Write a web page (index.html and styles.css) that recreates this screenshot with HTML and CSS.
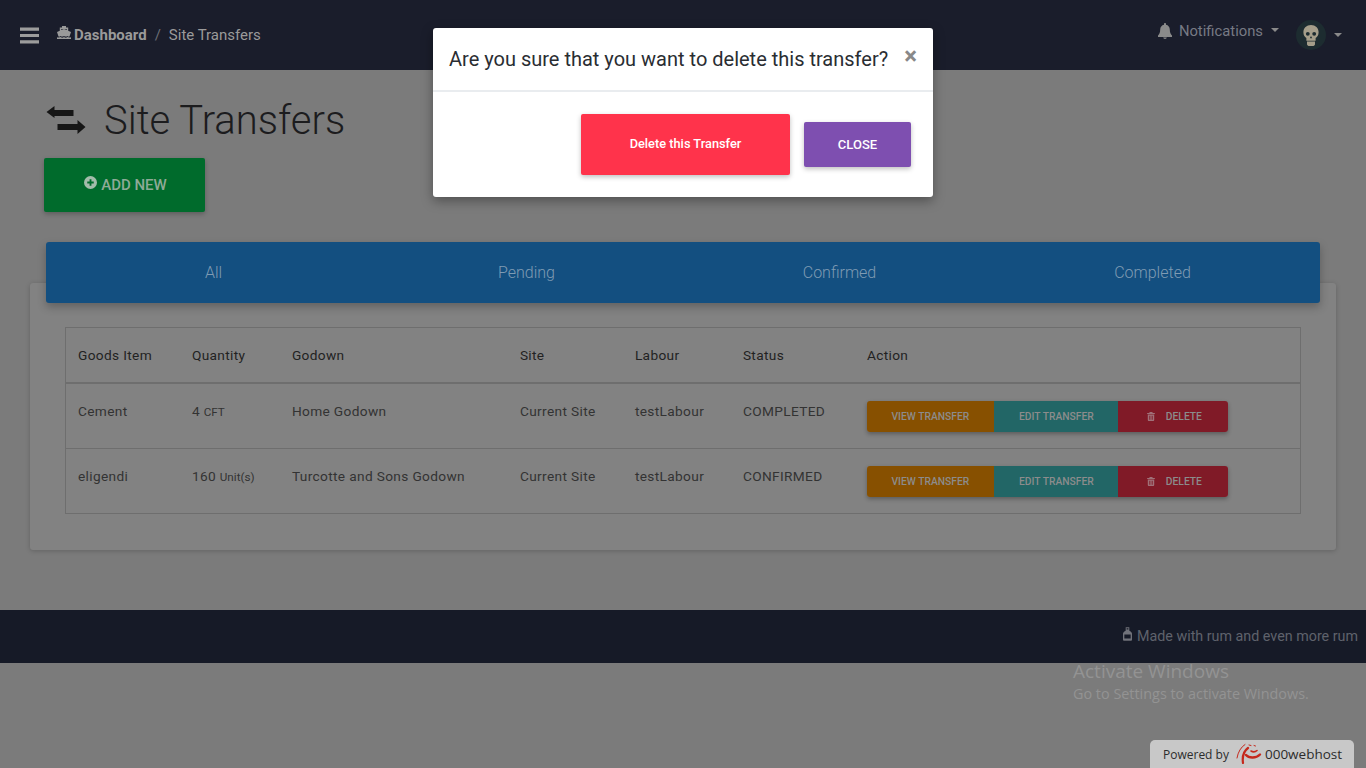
FILE: index.html
```html
<!DOCTYPE html>
<html lang="en">
<head>
    <meta charset="UTF-8">
    <meta name="viewport" content="width=device-width, initial-scale=1.0">
    <title>Site Transfers</title>
    <link rel="stylesheet" href="styles.css">
</head>
<body>
    <nav class="navbar">
        <div class="nav-left">
            <svg class="burger" viewBox="0 0 20 17"><path d="M0 0h20v3.400H0zM0 6.800h20v3.400H0zM0 13.600h20V17H0z"/></svg>
            <svg class="ship" viewBox="0 0 14 13"><path d="M5 0h4v1.500h2.200v3.200L14 6l-1.500 4.600c-.9.3-1.500-.2-2-.6-.9.8-2.300.8-3.500 0-1.200.8-2.600.8-3.500 0-.5.4-1.100.9-2 .6L0 6l2.800-1.300V1.500H5zM4.200 3v1l2.800-1 2.800 1V3zM0 11.200c1.200.6 2.300.5 3.500-.1 1.200.7 2.400.7 3.500 0 1.100.7 2.300.7 3.500 0 1.200.6 2.300.7 3.500.1V13H0z"/></svg>
            <b class="crumb-home">Dashboard</b>
            <span class="crumb-sep">/</span>
            <span class="crumb-page">Site Transfers</span>
        </div>
        <div class="nav-right">
            <svg class="bell" viewBox="0 0 14 16"><path d="M7 0c.6 0 1 .4 1 1v.7c2.300.5 3.800 2.400 3.800 4.800 0 3.500 1 4.700 2.200 6V14H0v-1.500c1.200-1.300 2.200-2.500 2.200-6 0-2.400 1.500-4.300 3.800-4.800V1c0-.6.4-1 1-1zM5.200 14.600h3.600c0 .8-.8 1.400-1.800 1.400s-1.800-.6-1.800-1.400z"/></svg>
            <span class="notif">Notifications</span>
            <i class="caret caret-notif"></i>
            <span class="avatar">
                <svg viewBox="0 0 20 26"><path d="M10 0c5.500 0 9.500 3.800 9.500 9 0 3.400-1.500 5.700-3.700 7v3.500H4.200V16C2 14.700.5 12.400.5 9 .5 3.800 4.500 0 10 0zM6 8.500a2.400 2.400 0 1 0 0 4.800 2.400 2.400 0 0 0 0-4.800zm8 0a2.400 2.400 0 1 0 0 4.800 2.400 2.400 0 0 0 0-4.800zm-4 5l-1.500 3h3z" fill-rule="evenodd"/><path d="M5 20.500h10V24c0 1-1 2-2 2H7c-1 0-2-1-2-2z"/></svg>
            </span>
            <i class="caret"></i>
        </div>
    </nav>

    <main class="content">
        <h1 class="page-title">
            <svg class="title-icon" viewBox="0 0 40 28"><path d="M.5 6l8-6v4h19v6h-19v2zM39.500 21l-8-7v4h-20v6h20v4z"/></svg>
            Site Transfers
        </h1>
        <button class="btn-add">
            <svg viewBox="0 0 14 14"><path fill-rule="evenodd" d="M7 0a7 7 0 1 1 0 14A7 7 0 0 1 7 0zM6 3.500v2.500H3.500v2H6v2.500h2V8h2.500V6H8V3.500z"/></svg>
            ADD NEW
        </button>

        <div class="tabs">
            <span>All</span>
            <span>Pending</span>
            <span>Confirmed</span>
            <span>Completed</span>
        </div>

        <section class="card">
            <table class="transfers">
                <thead>
                    <tr>
                        <th class="col-item">Goods Item</th>
                        <th class="col-qty">Quantity</th>
                        <th class="col-godown">Godown</th>
                        <th class="col-site">Site</th>
                        <th class="col-labour">Labour</th>
                        <th class="col-status">Status</th>
                        <th>Action</th>
                    </tr>
                </thead>
                <tbody>
                    <tr>
                        <td>Cement</td>
                        <td>4 <small>CFT</small></td>
                        <td>Home Godown</td>
                        <td>Current Site</td>
                        <td>testLabour</td>
                        <td>COMPLETED</td>
                        <td>
                            <div class="actions">
                                <a class="act act-view">View Transfer</a>
                                <a class="act act-edit">Edit Transfer</a>
                                <a class="act act-delete"><svg viewBox="0 0 12 14"><path fill-rule="evenodd" d="M4 0h4l.8 1.500H12V3H0V1.500h3.200zM1 4h10v8.500c0 .8-.7 1.500-1.500 1.500h-7C1.700 14 1 13.300 1 12.500zm2.200 1.800v6.200h1V5.800zm2.300 0v6.200h1V5.800zm2.300 0v6.200h1V5.800z"/></svg>Delete</a>
                            </div>
                        </td>
                    </tr>
                    <tr>
                        <td>eligendi</td>
                        <td>160 <small>Unit(s)</small></td>
                        <td>Turcotte and Sons Godown</td>
                        <td>Current Site</td>
                        <td>testLabour</td>
                        <td>CONFIRMED</td>
                        <td>
                            <div class="actions">
                                <a class="act act-view">View Transfer</a>
                                <a class="act act-edit">Edit Transfer</a>
                                <a class="act act-delete"><svg viewBox="0 0 12 14"><path fill-rule="evenodd" d="M4 0h4l.8 1.500H12V3H0V1.500h3.200zM1 4h10v8.500c0 .8-.7 1.500-1.500 1.500h-7C1.700 14 1 13.300 1 12.500zm2.200 1.800v6.200h1V5.800zm2.300 0v6.200h1V5.800zm2.300 0v6.200h1V5.800z"/></svg>Delete</a>
                            </div>
                        </td>
                    </tr>
                </tbody>
            </table>
        </section>
    </main>

    <footer class="footer">
        <svg viewBox="0 0 10 15"><path fill-rule="evenodd" d="M3 0h4v3.500c0 .6 3 1.500 3 3.500v7c0 .6-.4 1-1 1H1c-.6 0-1-.4-1-1V7c0-2 3-2.900 3-3.500zM4 1v1.500h2V1zM1.500 8v4.500h7V8z"/></svg>
        Made with rum and even more rum
    </footer>

    <div class="modal">
        <div class="modal-head">
            <h5>Are you sure that you want to delete this transfer?</h5>
            <span class="modal-x">&times;</span>
        </div>
        <div class="modal-body">
            <button class="btn-confirm">Delete this Transfer</button>
            <button class="btn-close">CLOSE</button>
        </div>
    </div>

    <div class="activate">
        <div class="activate-title">Activate Windows</div>
        <div class="activate-sub">Go to Settings to activate Windows.</div>
    </div>

    <div class="host-badge">
        <span>Powered by</span>
        <svg viewBox="0 0 26 22" fill="none" stroke="#c5281c" stroke-linecap="round"><path d="M9 1.500C5 4 2 9 1 15" stroke-width="1"/><path d="M12 5C8 8 6 13 7 20" stroke-width="2.200"/><path d="M10 12c3 3.500 10 3.500 14-.5" stroke-width="2.400"/><path d="M15 8c2 1.200 4 1.200 6-.5" stroke-width="1.600"/><path d="M13 2l2 .5M18 2.500l1.500.5" stroke-width="1"/></svg>
        <span class="host-name">000webhost</span>
    </div>
</body>
</html>
```

FILE: styles.css
```css
* {
    box-sizing: border-box;
}

body {
    margin: 0;
    min-height: 768px;
    font-family: Roboto, sans-serif;
    background-color: #7b7b7b;
    color: #2a2a2a;
    overflow: hidden;
}

/* top bar */
.navbar {
    display: flex;
    justify-content: space-between;
    height: 70px;
    background-color: #1a1d2b;
}

.nav-left {
    display: flex;
    align-items: center;
    padding-left: 20px;
    font-size: 15px;
    color: #9a9a9a;
}

.burger {
    width: 19px;
    height: 17px;
    margin-right: 18px;
    fill: #9c9c9c;
}

.ship {
    width: 14px;
    height: 13px;
    margin: -5px 3px 0 0;
    fill: #9a9a9a;
}

.crumb-home {
    font-weight: 700;
}

.crumb-sep {
    margin: 0 8px;
    color: #6b6d75;
}

.nav-right {
    display: flex;
    align-items: center;
    padding: 0 24px 8px 0;
    color: #777a84;
    font-size: 14.800px;
}

.bell {
    width: 14px;
    height: 16px;
    margin-right: 7px;
    fill: #8a8a8a;
}

.caret {
    width: 0;
    height: 0;
    margin-left: 8px;
    border-top: 4px solid #8a8a8a;
    border-left: 4px solid transparent;
    border-right: 4px solid transparent;
}

.caret-notif {
    margin-top: -2px;
}

.avatar {
    display: flex;
    align-items: center;
    justify-content: center;
    width: 30px;
    height: 30px;
    margin: 8px 0 0 17px;
    border-radius: 50%;
    background-color: #1d2c30;
}

.avatar + .caret {
    margin-top: 8px;
}

.avatar svg {
    width: 16px;
    height: 21px;
    fill: #a59e8a;
}

/* page body */
.content {
    height: 540px;
    padding: 25px 30px 0;
}

.page-title {
    display: flex;
    align-items: center;
    height: 50px;
    margin: 0 0 13px 16px;
    font-size: 40px;
    font-weight: 300;
    color: #1c1c1e;
}

.title-icon {
    width: 40px;
    height: 28px;
    margin-right: 18px;
    fill: #161616;
}

.btn-add {
    display: flex;
    align-items: center;
    justify-content: center;
    width: 161px;
    height: 54px;
    margin-left: 14px;
    padding: 0 0 0 2px;
    border: none;
    border-radius: 2px;
    background-color: #006b2c;
    color: #8eaa97;
    font-family: inherit;
    font-size: 15px;
    font-weight: 500;
    box-shadow: 0 2px 5px rgba(0, 0, 0, 0.25);
}

.btn-add svg {
    width: 13px;
    height: 13px;
    margin: -5px 4px 0 0;
    fill: #a3bcab;
}

.tabs {
    position: relative;
    z-index: 1;
    display: grid;
    grid-template-columns: repeat(4, 1fr);
    align-items: center;
    height: 61px;
    margin: 30px 16px 0;
    padding: 0 11px;
    border-radius: 3px;
    background-color: #134f80;
    color: #7f9bb3;
    font-size: 16px;
    font-weight: 300;
    text-align: center;
    box-shadow: 0 4px 8px rgba(0, 0, 0, 0.25);
}

.card {
    height: 267px;
    margin-top: -20px;
    padding: 44px 35px 0;
    border-radius: 3px;
    background-color: #828282;
    box-shadow: 0 1px 5px rgba(0, 0, 0, 0.2);
}

/* table */
.transfers {
    width: 100%;
    border-collapse: collapse;
    table-layout: fixed;
    border: 1px solid #6e6e6e;
    font-size: 13.700px;
    letter-spacing: 0.35px;
    text-align: left;
    color: #333;
}

.transfers th {
    height: 55px;
    padding: 0 12px;
    font-weight: 400;
    color: #222;
    border-bottom: 2px solid #6e6e6e;
}

.transfers td {
    height: 65px;
    padding: 0 12px 10px;
    border-bottom: 1px solid #6e6e6e;
}

.transfers tbody tr:first-child td {
    height: 66px;
    padding-top: 1px;
}

.transfers small {
    font-size: 11.700px;
    letter-spacing: 0;
}

.col-item { width: 114.400px; }
.col-qty { width: 100px; }
.col-godown { width: 228px; }
.col-site { width: 115px; }
.col-labour { width: 108px; }
.col-status { width: 124px; }

.actions {
    display: flex;
    width: 361px;
    height: 31px;
    margin-top: 10px;
    border-radius: 3px;
    overflow: hidden;
    box-shadow: 0 2px 4px rgba(0, 0, 0, 0.3);
}

.act {
    display: flex;
    align-items: center;
    justify-content: center;
    color: #8c8c8c;
    font-size: 10.300px;
    font-weight: 500;
    letter-spacing: 0;
    text-transform: uppercase;
}

.act-view {
    width: 127px;
    background-color: #875000;
}

.act-edit {
    width: 124px;
    padding-left: 1px;
    background-color: #226666;
}

.act-delete {
    width: 110px;
    padding-left: 3px;
    background-color: #801a27;
}

.act-delete svg {
    width: 8px;
    height: 9px;
    margin-right: 11px;
    fill: #a07078;
}

.footer {
    display: flex;
    align-items: center;
    justify-content: flex-end;
    height: 53px;
    padding: 0 8px 1px 0;
    background-color: #161a27;
    color: #5f626c;
    font-size: 14.300px;
}

.footer svg {
    width: 9px;
    height: 14px;
    margin: -4px 5px 0 0;
    fill: #70727a;
}

/* modal */
.modal {
    position: absolute;
    top: 28px;
    left: 433px;
    width: 500px;
    height: 169px;
    border-radius: 3px;
    background-color: #fff;
    box-shadow: 0 4px 12px rgba(0, 0, 0, 0.35);
}

.modal-head {
    display: flex;
    justify-content: space-between;
    height: 64px;
    padding: 16px 16px 0;
    border-bottom: 2px solid #e9ecef;
}

.modal-head h5 {
    margin: 0;
    font-size: 20px;
    font-weight: 400;
    line-height: 30px;
    color: #2a2d32;
}

.modal-x {
    margin-top: -2px;
    font-size: 24px;
    font-weight: 700;
    color: #888;
}

.modal-body {
    display: flex;
    align-items: center;
    justify-content: flex-end;
    gap: 14px;
    height: 105px;
    padding: 0 22px 0 0;
}

.modal-body button {
    border: none;
    border-radius: 2px;
    color: #fff;
    font-family: inherit;
    font-weight: 500;
    box-shadow: 0 2px 5px rgba(0, 0, 0, 0.25);
}

.btn-confirm {
    width: 209px;
    height: 61px;
    padding: 0 0 2px;
    background-color: #ff334b;
    font-size: 12.800px;
}

.btn-close {
    width: 107px;
    height: 45px;
    background-color: #7e4fb0;
    font-size: 13px;
}

/* windows watermark */
.activate {
    position: absolute;
    top: 658px;
    left: 1073px;
    font-family: "Open Sans", sans-serif;
    color: #939393;
}

.activate-title {
    font-size: 19px;
}

.activate-sub {
    font-size: 14.400px;
}

.host-badge {
    position: absolute;
    right: 12px;
    bottom: 0;
    display: flex;
    align-items: center;
    width: 204px;
    height: 28px;
    padding: 0 0 0 13px;
    border-radius: 5px 5px 0 0;
    background-color: #c8c8c8;
    font-family: "Open Sans", sans-serif;
    font-size: 12px;
    color: #2c2c2c;
}

.host-badge svg {
    width: 26px;
    height: 22px;
    margin: 0 0 0 7px;
}

.host-name {
    margin-left: 3px;
    font-size: 13.500px;
}
```
